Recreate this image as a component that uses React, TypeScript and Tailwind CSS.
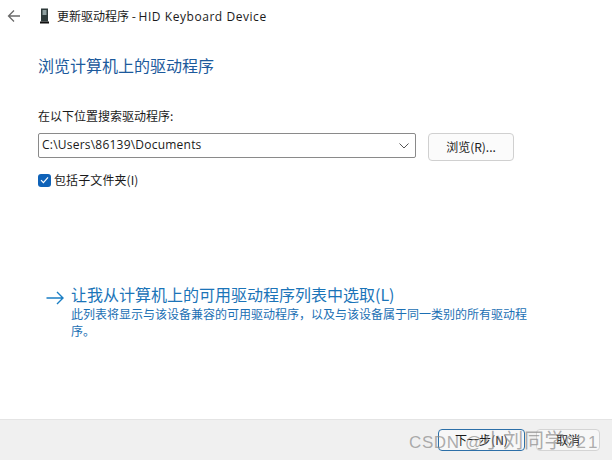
import React from "react";

export default function App() {
  return (
    <div className="relative w-[612px] h-[460px] bg-white flex flex-col overflow-hidden font-['Noto_Sans_CJK_SC','Noto_Sans',sans-serif] text-[#1a1a1a]">
      <div className="flex-1 flex flex-col">
        <div className="h-[32px] flex items-center pl-[7px]">
          <svg width="14" height="14" viewBox="0 0 14 14" fill="none" stroke="#6b6b6b" strokeWidth="1.3">
            <path d="M13 7H1.5M7 1.5 1.5 7 7 12.5" />
          </svg>
          <svg className="ml-[19px]" width="9" height="16" viewBox="0 0 9 16">
            <rect x="1" y="0.5" width="7" height="13" fill="#2e3a3a" />
            <rect x="2.5" y="2" width="4" height="5" fill="#8fa0a0" />
            <rect x="0" y="13.5" width="9" height="2" fill="#111" />
          </svg>
          <span className="ml-[8px] text-[12px] leading-[16px] font-['Noto_Sans_CJK_SC',sans-serif]">
            更新驱动程序 - <span className="font-['Open_Sans','Noto_Sans',sans-serif] text-[12px] tracking-[0.55px]">HID Keyboard Device</span>
          </span>
        </div>
        <div className="ml-[38px] mt-[22px] text-[16px] leading-[22px] text-[#1c5a9c]">浏览计算机上的驱动程序</div>
        <div className="ml-[38px] mt-[32px] text-[12px] leading-[16px]">在以下位置搜索驱动程序:</div>
        <div className="ml-[38px] mt-[8px] flex items-start">
          <div className="w-[378px] h-[25px] mt-[1px] border border-[#8a8a8a] rounded-[2px] flex items-center pl-[3px] pr-[6px] justify-between">
            <span className="text-[12px] leading-[16px] mb-[2px] font-['Open_Sans',sans-serif] tracking-[0.22px]">C:\Users\86139\Documents</span>
            <svg width="10" height="6" viewBox="0 0 10 6" fill="none" stroke="#555" strokeWidth="1">
              <path d="M0.5 0.5 5 5 9.5 0.5" />
            </svg>
          </div>
          <button className="ml-[12px] mt-[1px] w-[86px] h-[28px] border border-[#d0d0d0] rounded-[4px] bg-[#fbfbfb] text-[12px] flex items-center justify-center">
            浏览(R)...
          </button>
        </div>
        <div className="ml-[38px] mt-[11px] flex items-center">
          <span className="w-[13px] h-[13px] rounded-[3px] bg-[#0f62b8] flex items-center justify-center">
            <svg width="9" height="8" viewBox="0 0 9 8" fill="none" stroke="#fff" strokeWidth="1.2">
              <path d="M1 4.2 3.4 6.6 8 1.4" />
            </svg>
          </span>
          <span className="ml-[3px] text-[12px] leading-[16px] tracking-[0.1px]">包括子文件夹(I)</span>
        </div>
        <div className="ml-[46px] mt-[95px] flex items-start">
          <svg className="mt-[8px]" width="18" height="14" viewBox="0 0 18 14" fill="none" stroke="#1a7ec4" strokeWidth="1.4">
            <path d="M0.5 7H17M11 1l6 6-6 6" />
          </svg>
          <div className="ml-[7px]">
            <div className="text-[16px] leading-[22px] text-[#1b74b8]">让我从计算机上的可用驱动程序列表中选取(L)</div>
            <div className="w-[458px] text-[12px] leading-[17px] text-[#1b6fb4]">
              此列表将显示与该设备兼容的可用驱动程序，以及与该设备属于同一类别的所有驱动程序。
            </div>
          </div>
        </div>
      </div>
      <div className="h-[41px] bg-[#f0f0f0] border-t border-[#e4e4e4] flex items-start justify-end pr-[12px] pt-[9px] gap-[11px]">
        <button className="w-[87px] h-[22px] border border-[#2c6fa8] rounded-[4px] bg-[#f7f7f7] text-[12px] flex items-center justify-center">下一步(N)</button>
        <button className="w-[64px] h-[22px] border border-[#d4d4d4] rounded-[4px] bg-[#f7f7f7] text-[12px] flex items-center justify-center">取消</button>
      </div>
      <div className="absolute left-[409px] top-[428px] text-[17px] leading-[24px] text-[#8a8a8a]/70 font-['Liberation_Sans',sans-serif] whitespace-nowrap tracking-[0.6px]">
        CSDN @<span className="font-['Noto_Sans_CJK_SC',sans-serif] text-[20px]">小刘同学</span><span className="tracking-[2px]">921</span>
      </div>
    </div>
  );
}
